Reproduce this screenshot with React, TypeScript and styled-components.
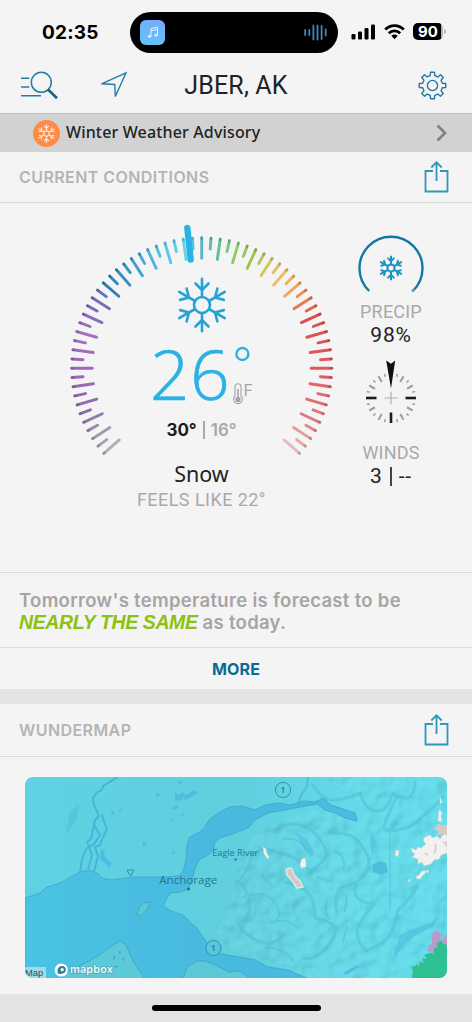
import styled, { createGlobalStyle } from "styled-components";

const GlobalStyle = createGlobalStyle`
	* {
		box-sizing: border-box;
	}
	body {
		margin: 0;
		background: #f4f4f4;
		font-family: Inter, "Liberation Sans", sans-serif;
		color: #222;
	}
	svg {
		display: block;
		flex-shrink: 0;
	}
`;

const Screen = styled.div`
	width: 472px;
	height: 1022px;
	overflow: hidden;
	display: flex;
	flex-direction: column;
	background: #f4f4f4;
`;

const StatusBar = styled.div`
	height: 58px;
	padding: 12px 0 0 42px;
	display: flex;
	align-items: flex-start;
`;

const Clock = styled.div`
	width: 88px;
	line-height: 41px;
	font-size: 19px;
	font-weight: 700;
	letter-spacing: 0.2px;
	color: #000;
`;

const Island = styled.div`
	width: 208px;
	height: 41px;
	padding: 0 11px 0 10px;
	border-radius: 21px;
	background: #000;
	display: flex;
	align-items: center;
	justify-content: space-between;
`;

const MusicTile = styled.div`
	width: 25px;
	height: 25px;
	border-radius: 6px;
	background: linear-gradient(20deg, #62c4fa, #78a9fa);
	display: flex;
	align-items: center;
	justify-content: center;
`;

const StatusIcons = styled.div`
	height: 39px;
	margin-left: 13px;
	display: flex;
	align-items: center;
	gap: 8px;
`;

const Battery = styled.div`
	width: 30px;
	height: 17px;
	border-radius: 5px;
	background: linear-gradient(90deg, #000 28px, #b4b4b4 28px);
	color: #fff;
	font-size: 15px;
	font-weight: 700;
	line-height: 17px;
	text-align: center;
`;

const BatteryGroup = styled.div`
	display: flex;
	align-items: center;
	gap: 1px;
	&::after {
		content: "";
		width: 2px;
		height: 5px;
		border-radius: 0 2px 2px 0;
		background: #bbb;
	}
`;

const Header = styled.div`
	height: 55px;
	padding: 0 20px;
	display: grid;
	grid-template-columns: 1fr auto 1fr;
	align-items: center;
`;

const HeaderLeft = styled.div`
	display: flex;
	gap: 41px;
`;

const HeaderRight = styled.div`
	padding-right: 5px;
	display: flex;
	justify-content: flex-end;
`;

const Title = styled.h1`
	margin: 0;
	font-family: Roboto, sans-serif;
	font-size: 25px;
	font-weight: 400;
	letter-spacing: 0.15px;
`;

const Alert = styled.div`
	height: 39px;
	padding: 0 25px 0 33px;
	border-top: 1px solid #bcbcbc;
	background: #d2d2d2;
	display: flex;
	align-items: center;
	gap: 6px;
`;

const AlertIcon = styled.div`
	width: 27px;
	height: 27px;
	border-radius: 50%;
	background: #fd8b44;
	display: flex;
	align-items: center;
	justify-content: center;
`;

const AlertText = styled.div`
	flex: 1;
	font-family: "Noto Sans", sans-serif;
	font-size: 16px;
	font-weight: 500;
	letter-spacing: 0.15px;
	line-height: 34px;
	padding-bottom: 2px;
`;

const SectionHead = styled.div<{ $height: number }>`
	height: ${(p) => p.$height}px;
	padding: 0 23px 0 19px;
	border-bottom: 1px solid #dadada;
	display: flex;
	align-items: center;
	justify-content: space-between;
	color: #b4b4b4;
`;

const HeadLabel = styled.span`
	font-size: 16px;
	font-weight: 600;
	letter-spacing: 0.42px;
`;

const Conditions = styled.div`
	height: 370px;
	padding: 12px 39px 0 60px;
	border-bottom: 1px solid #dadada;
	display: flex;
	justify-content: space-between;
`;

const Gauge = styled.div`
	width: 283px;
	display: grid;
	align-items: start;
	& > * {
		grid-area: 1 / 1;
	}
`;

const GaugeBody = styled.div`
	padding-top: 62px;
	display: flex;
	flex-direction: column;
	align-items: center;
`;

const Temperature = styled.div`
	height: 83px;
	width: 103px;
	display: flex;
	font-family: "Open Sans", sans-serif;
	font-weight: 300;
	color: #2bb2e4;
`;

const Degrees = styled.span`
	width: 83px;
	font-size: 69px;
	line-height: 81px;
	letter-spacing: 0.8px;
	-webkit-text-stroke: 0.7px #2bb2e4;
`;

const Unit = styled.div`
	padding-top: 13px;
	display: flex;
	flex-direction: column;
	gap: 21px;
`;

const UnitLetter = styled.div`
	display: flex;
	gap: 1px;
	font-family: Inter, sans-serif;
	font-size: 16px;
	font-weight: 400;
	line-height: 14px;
	color: #a6a6a6;
`;

const HighLow = styled.div`
	height: 28px;
	display: flex;
	align-items: center;
	gap: 6px;
	font-size: 17px;
	font-weight: 600;
	color: #a9a9a9;
`;

const High = styled.span`
	font-weight: 700;
	color: #1c1c1c;
`;

const Divider = styled.span<{ $color: string; $height: number }>`
	width: 2px;
	height: ${(p) => p.$height}px;
	background: ${(p) => p.$color};
`;

const Summary = styled.div`
	margin-top: 16px;
	font-family: "Noto Sans", sans-serif;
	font-size: 21.5px;
	line-height: 28px;
`;

const FeelsLike = styled.div`
	font-family: Roboto, sans-serif;
	font-size: 18px;
	letter-spacing: 0.45px;
	line-height: 24px;
	color: #a9a9a9;
	white-space: nowrap;
`;

const Side = styled.div`
	width: 84px;
	padding-top: 19px;
	display: flex;
	flex-direction: column;
	align-items: center;
`;

const SideLabel = styled.div<{ $top: number }>`
	margin-top: ${(p) => p.$top}px;
	font-family: Roboto, sans-serif;
	font-size: 18px;
	letter-spacing: 0.2px;
	line-height: 22px;
	color: #a9a9a9;
`;

const SideValue = styled.div`
	height: 25px;
	display: flex;
	align-items: center;
	gap: 7px;
	font-family: Roboto, sans-serif;
	font-size: 21px;
	letter-spacing: 0.8px;
	line-height: 25px;
`;

const CompassBox = styled.div`
	margin-top: 11px;
`;

const Forecast = styled.div`
	height: 75px;
	padding: 16px 19px 0;
	border-bottom: 1px solid #dedede;
	font-size: 18.5px;
	font-weight: 600;
	letter-spacing: 0.31px;
	line-height: 22px;
	color: #a5a5a5;
	white-space: nowrap;
`;

const Same = styled.em`
	color: #8cc10f;
	font-family: "Liberation Sans", sans-serif;
	font-weight: 700;
	font-size: 19.5px;
	letter-spacing: -0.4px;
`;

const More = styled.button`
	height: 41px;
	border: 0;
	padding: 0;
	background: transparent;
	font-family: inherit;
	font-size: 16px;
	font-weight: 700;
	letter-spacing: 0.15px;
	color: #0a6b94;
`;

const Gap = styled.div`
	height: 15px;
	background: #e3e3e3;
`;

const MapCard = styled.div`
	height: 237px;
	padding: 20px 25px 0;
`;

const MapFrame = styled.div`
	height: 201px;
	border-radius: 8px;
	overflow: hidden;
`;

const BottomBar = styled.div`
	flex: 1;
	padding-top: 11px;
	background: #e3e3e3;
	display: flex;
	justify-content: center;
`;

const HomeIndicator = styled.div`
	width: 169px;
	height: 6px;
	border-radius: 3px;
	background: #000;
`;

const stops: [number, string][] = [
	[-32, "#b2aeb8"],
	[-30, "#a198b0"],
	[-27, "#8a6cab"],
	[-22, "#9f68bc"],
	[-18, "#a56fbd"],
	[-15, "#7c6bbb"],
	[-13, "#6572bf"],
	[-12, "#2e7eb6"],
	[-9, "#3596c9"],
	[-5, "#57bfe2"],
	[-2, "#62d5ee"],
	[0, "#58b6c9"],
	[2, "#62bf9e"],
	[4, "#8fca6d"],
	[6, "#9fc452"],
	[8, "#d6c658"],
	[10, "#f0b964"],
	[12, "#f4a259"],
	[14, "#e67853"],
	[16, "#d5504f"],
	[22, "#df5960"],
	[28, "#e27b7e"],
	[32, "#eab8ba"],
];

function hexToRgb(hex: string) {
	return [1, 3, 5].map((i) => parseInt(hex.slice(i, i + 2), 16));
}

function tickColor(n: number) {
	const next = Math.max(
		1,
		stops.findIndex(([at]) => at >= n)
	);
	const [a, from] = stops[next - 1];
	const [b, to] = stops[next];
	const t = (n - a) / (b - a);
	const end = hexToRgb(to);
	const mixed = hexToRgb(from).map((v, i) => Math.round(v + (end[i] - v) * t));
	return `rgb(${mixed.join(",")})`;
}

const ticks = Array.from({ length: 65 }, (_, i) => i - 32);

function Dial() {
	return (
		<svg width="283" height="250" viewBox="0 0 283 250">
			<g transform="translate(141.7 152.8)" strokeLinecap="round">
				{ticks.map((n) => (
					<g key={n} transform={`rotate(${n * 4.1})`}>
						<line y1="-130" y2={n % 2 ? -119 : -109.5} stroke={tickColor(n)} strokeWidth="2.9" />
						<line y1="-130.2" y2="-129" stroke="#000" strokeOpacity="0.16" strokeWidth="2.6" />
					</g>
				))}
			</g>
			<path d="M127.3 13 L130.7 44.5" stroke="#29b4e5" strokeWidth="6.4" strokeLinecap="round" />
		</svg>
	);
}

function Snowflake({
	size,
	color,
	weight,
}: {
	size: number;
	color: string;
	weight: number;
}) {
	return (
		<svg
			width={size}
			height={size}
			viewBox="-28 -28 56 56"
			fill="none"
			stroke={color}
			strokeWidth={weight}
			strokeLinecap="round"
			strokeLinejoin="round"
		>
			<circle r="8" />
			{[0, 60, 120, 180, 240, 300].map((a) => (
				<path key={a} transform={`rotate(${a})`} d="M0 -8 V-26.3 M-6.5 -21.5 L0 -15 L6.5 -21.5" />
			))}
		</svg>
	);
}

function Share() {
	return (
		<svg width="25" height="33" viewBox="0 0 25 33" fill="none" stroke="#3295bd" strokeWidth="1.8">
			<path d="M9 10 H1.5 V30.5 H23.5 V10 H16 M12.5 20 V1.2 M7.3 6.5 L12.5 1.2 L17.7 6.5" />
		</svg>
	);
}

function gearPath() {
	const points: string[] = [];
	for (let i = 0; i < 8; i++) {
		[
			[-13, 10.1],
			[-8.5, 13.4],
			[8.5, 13.4],
			[13, 10.1],
		].forEach(([offset, r]) => {
			const a = ((i * 45 + offset) * Math.PI) / 180;
			points.push(`${(Math.sin(a) * r).toFixed(2)} ${(-Math.cos(a) * r).toFixed(2)}`);
		});
	}
	return `M${points.join("L")}Z`;
}

function PrecipArc() {
	return (
		<svg width="68" height="60" viewBox="-34 -34 68 60">
			<path d="M-21.8 23 A31.5 31.5 0 1 1 21.8 23" fill="none" stroke="#1577a4" strokeWidth="2.4" />
			<path d="M21 23.6 L23.5 21" stroke="#8a9ca5" strokeWidth="2.6" />
			<g transform="translate(-12.5 -12.5)">
				<Snowflake size={25} color="#1b93c4" weight={4.4} />
			</g>
		</svg>
	);
}

function Compass() {
	return (
		<svg width="60" height="66" viewBox="-30 -39 60 66">
			{Array.from({ length: 24 }, (_, i) => i).map((i) => {
				if (i === 0) return null;
				const main = i % 6 === 0;
				const long = i % 2 === 0;
				return (
					<line
						key={i}
						y1="-25"
						y2={main ? -14.5 : long ? -18.5 : -22}
						stroke={main ? "#1d1d1d" : "#a0a0a0"}
						strokeWidth={main ? 2.6 : long ? 2.1 : 1.6}
						transform={`rotate(${i * 15})`}
					/>
				);
			})}
			<path d="M-6.5 0 H6.5 M0 -6.5 V6.5" stroke="#aaa" strokeWidth="1.1" />
			<path d="M-4.8 -37.5 L0 -34.3 L4.2 -37.5 L0 -9.5 Z" fill="#111" />
		</svg>
	);
}

function WunderMap() {
	return (
		<svg width="422" height="201" viewBox="0 0 422 201">
			<defs>
				<linearGradient id="sea" x1="0" y1="0" x2="1" y2="0">
					<stop offset="0" stopColor="#4ac3e3" />
					<stop offset="0.6" stopColor="#48b9df" />
					<stop offset="1" stopColor="#4abde2" />
				</linearGradient>
				<linearGradient id="land" x1="0" y1="0" x2="1" y2="0">
					<stop offset="0" stopColor="#5ed2e3" />
					<stop offset="0.5" stopColor="#60cfde" />
					<stop offset="0.8" stopColor="#62dbe9" />
					<stop offset="1" stopColor="#60dcec" />
				</linearGradient>
				<filter id="relief" x="0" y="0" width="1" height="1">
					<feTurbulence type="fractalNoise" baseFrequency="0.06" numOctaves="2" seed="8" />
					<feDiffuseLighting surfaceScale="8" lightingColor="#8fe9f0" diffuseConstant="1.1">
						<feDistantLight azimuth="225" elevation="52" />
					</feDiffuseLighting>
				</filter>
				<clipPath id="mountains">
					<path d="M210 108 L214 84 L226 62 L250 46 L270 38 L295 32 L335 48 L340 30 L300 0 H422 V201 H282 L262 190 L230 181 L202 172 L190 150 L200 128 Z" />
				</clipPath>
			</defs>
			<rect width="422" height="201" fill="url(#land)" />
			<path d="M45 35 L54 27 L52 43 L41 57Z" fill="#54c8da" />
			<g clipPath="url(#mountains)">
				<rect width="422" height="201" filter="url(#relief)" opacity="0.15" />
			</g>
			<g fill="none" stroke="#4fc0d5" strokeWidth="3" opacity="0.55" strokeLinejoin="round" strokeLinecap="round">
				<path d="M247 55 Q262 44 275 48 T294 61 Q304 74 300 81 T285 94 Q272 80 262 78 T240 71 Q226 76 225 84 T214 104 Q226 118 225 130 T213 147 Q222 160 235 165 T260 157" />
				<path d="M288 8 Q298 24 310 23 T335 16 Q340 34 352 34 T367 16 Q380 24 385 20 T390 5 M372 19 Q362 40 359 49 T385 50 Q410 30 418 20" />
				<path d="M260 105 Q280 110 285 118 T290 141 Q306 144 310 150 T300 172 Q290 184 278 181 M305 56 Q324 56 330 61 T344 81 Q344 98 335 103 T315 111 Q308 122 312 135" />
				<path d="M345 90 Q328 106 330 116 T350 127 Q340 136 334 148 T341 174 Q360 166 365 158 T373 133 Q384 124 392 110" />
				<path d="M218 120 Q240 112 250 126 T246 146 Q262 140 272 150 M240 170 Q262 172 268 184 M258 62 Q276 60 280 72 M310 74 Q322 80 318 92 M302 122 Q298 132 304 142 M236 98 L246 108 M322 118 L320 134 M292 100 L304 104 M322 150 L318 164" strokeWidth="2" />
			</g>
			<g fill="url(#sea)" stroke="#3fa5c8" strokeWidth="0.8" strokeLinejoin="round">
				<path d="M0 121 L15 116 L22 110 L35 106 L44 101 L55 95 L64 93 L72 96 L77 101 L86 103 L108 100 L138 100 L154 99 L158 94 L161 83 L162 68 L165 60 L178 53 L184 43 L195 35 L205 30 L218 29 L230 33 L240 28 L253 26 L265 28 L278 24 L290 25 L298 21 L306 28 L318 32 L330 36 L332 44 L320 41 L310 36 L300 33 L292 27 L270 31 L243 36 L230 43 L223 51 L210 56 L195 61 L190 65 L188 73 L182 79 L175 82 L170 91 L167 104 L163 112 L156 115 L145 116 L138 129 L146 134 L158 138 L166 146 L172 151 L180 163 L188 175 L202 178 L215 180 L230 183 L243 190 L263 193 L284 202 H0Z" />
			</g>
			<g fill="#5bc9d8" stroke="#429fbd" strokeWidth="0.8">
				<path d="M36 202 L45 193 L62 185 L74 178 L85 170 L95 164 L101 168 L108 184 L120 202Z" />
				<path d="M158 202 L162 190 L172 184 L180 184 L188 187 L198 192 L204 195 L215 194 L226 202Z" />
				<path d="M112 138 L115 129 L121 125 L125 126 L122 133 L115 139Z" />
			</g>
			<g fill="none" stroke="#43b4d8" strokeWidth="1.8" strokeLinejoin="round">
				<path d="M92 0 L85 5 L79 8 L76 14 L72 15 L68 21 L69 28 L74 39 L70 43 L69 48 L75 58 L69 67 L61 72 L57 82 L55 96" />
				<path d="M77 37 L79 45 L82 52 L78 60 L75 68 L70 70 L73 79 L69 95 M69 48 L66 62 L62 65 L67 78 L63 92" />
				<path d="M273 28 L276 18 L282 10 L283 0" opacity="0.7" />
			</g>
			<g fill="#4ebcdf">
				<path d="M76 72 L80 74 L79 78 L83 83 L87 86 L84 91 L79 85 L75 82Z" />
				<path d="M150 16 L154 18 L159 15 L157 23 L150 24Z M157 18 L163 17 L170 13 L173 16 L166 20 L160 23Z M131 15 L135 17 L132 21Z M147 31 L152 28 L153 31 L149 33Z M118 64 L122 68 L118 70Z M86 34 L91 35 L87 39Z M94 33 L98 32 L94 36Z M146 76 L149 74 L150 77Z M153 4 L158 5 L155 8Z M145 43 L148 42 L147 45Z M155 38 L159 36 L158 39Z" />
				<path d="M347 88 L354 84 L361 86 L363 95 L356 98 L348 95Z" />
				<path d="M270 55 L282 62 L290 77 L286 80 L278 70Z M347 54 L351 65 L347 77 L345 62Z" opacity="0.55" />
				<path d="M375 158 L388 152 L407 145 L412 139 L409 149 L391 158 L379 168 L370 181 L369 175Z" opacity="0.65" />
				<path d="M318 196 L333 188 L334 190 L321 198Z" />
			</g>
			<path d="M365 55 V134" stroke="#43a8bd" strokeWidth="0.5" />
			<path d="M88 178 L91 180 L88 183Z M94 173 L97 175 L94 177Z M98 180 L100 184 L97 183Z M90 188 L93 189 L90 192Z" fill="#4ba9c2" />
			<g fill="#f3f0f0" stroke="#d8cfcd" strokeWidth="0.5">
				<path d="M238 70 L241 72 L242 77 L244 80 L243 82 L239 77Z" />
				<path d="M277 82 L280 81 L281 86 L281 90 L276 91 L275 87Z" />
				<path d="M261 93 L264 91 L267 92 L270 99 L275 104 L278 110 L272 111 L267 104 L262 98Z" fill="#d5c9c5" stroke="#eceaea" strokeWidth="1.2" />
				<path d="M422 56 L418 58 L415 62 L412 59 L408 61 L405 58 L400 60 L398 63 L401 67 L396 71 L393 70 L391 73 L386 71 L387 75 L390 77 L387 80 L393 82 L393 87 L397 85 L399 89 L406 87 L409 83 L414 82 L416 78 L422 76Z" />
				<path d="M422 48 L417 49 L413 47 L409 52 L414 54 L412 58 L418 57 L422 58Z" fill="#d9c7c5" />
				<path d="M414 33 L417 35 L416 40 L417 45 L413 44Z M415 20 L417 25 L415 27Z M371 73 L374 74 L373 80 L370 78Z M391 99 L394 98 L397 94 L402 94 L398 98 L395 102 L392 102Z M400 94 L404 93 L403 96Z M383 103 L386 102 L384 105Z" />
			</g>
			<path d="M410 67 Q412 72 409 76 M418 66 L422 65 L421 69 M400 76 L403 78" fill="none" stroke="#dcc6c2" strokeWidth="1.6" />
			<path d="M402 173 L404 170 L403 168 L407 167 L407 157 L411 153 L414 155 L416 157 L415 163 L419 161 L420 158 L422 157 V174 L407 176Z" fill="#b79bcd" />
			<path d="M422 201 H387 L388 194 L386 190 L390 189 L392 187 L394 190 L395 184 L399 186 L397 181 L402 182 L399 178 L405 176 L409 177 L409 171 L413 170 L411 166 L416 164 L419 167 L422 168Z" fill="#2cc092" />
			<g fill="none" stroke="#348fa9">
				<circle cx="258" cy="13" r="7.6" />
				<circle cx="188.5" cy="171" r="7.6" fill="#58c7de" />
				<path d="M102 93 H109 L105.5 99Z" />
			</g>
			<g fontFamily="Open Sans, sans-serif" fill="#26768f" textAnchor="middle">
				<text x="258" y="16" fontSize="8.5" fontWeight="600">1</text>
				<text x="188.5" y="174" fontSize="8.5" fontWeight="600">1</text>
				<text x="210.3" y="79" fontSize="9.2" fontWeight="500" textLength="46" lengthAdjust="spacingAndGlyphs">Eagle River</text>
				<text x="163.3" y="106.5" fontSize="11.5" fontWeight="500" textLength="58" lengthAdjust="spacingAndGlyphs">Anchorage</text>
			</g>
			<circle cx="163.5" cy="112" r="1.4" fill="#1d687f" />
			<circle cx="210.5" cy="82.5" r="1.2" fill="#2a7e94" />
			<rect y="190" width="21" height="11" fill="#b5dfe9" fillOpacity="0.8" />
			<text x="0" y="199.3" fontFamily="Liberation Sans, sans-serif" fontSize="9.3" fill="#344c54">Map</text>
			<circle cx="36.3" cy="193" r="6.6" fill="#fff" />
			<path d="M32.8 196.8 C31.5 192 33.8 189 37 189 C40 189 41.3 191.6 40.6 194 C39.5 197 36 197.2 32.8 196.8Z" fill="#347d9b" />
			<circle cx="37.2" cy="192.7" r="1.6" fill="#fff" />
			<text x="45" y="196" fontFamily="Inter, sans-serif" fontSize="11" fontWeight="600" fill="#eefafc" stroke="#4b99ac" strokeWidth="1.2" paintOrder="stroke" textLength="43">mapbox</text>
		</svg>
	);
}

export default function App() {
	return (
		<Screen>
			<GlobalStyle />
			<StatusBar>
				<Clock>02:35</Clock>
				<Island>
					<MusicTile>
						<svg width="12" height="13" viewBox="0 0 12 13" fill="none" stroke="#e5f5ff">
							<path d="M4 10 V2.7 L10.5 1.2 V8.7 M4 4.8 L10.5 3.3" />
							<ellipse cx="2.6" cy="10.4" rx="1.3" ry="0.9" fill="#e5f5ff" />
							<ellipse cx="9.1" cy="9.2" rx="1.3" ry="0.9" fill="#e5f5ff" />
						</svg>
					</MusicTile>
					<svg width="23" height="17" viewBox="0 0 23 17" stroke="#4585b8" strokeWidth="1.8" strokeLinecap="round">
						<path d="M1.2 6 V11 M5.3 6 V11 M9.4 1.5 V15.5 M13.5 1.5 V15.5 M17.6 2 V15 M21.7 5.5 V11.5" />
					</svg>
				</Island>
				<StatusIcons>
					<svg width="25" height="16" viewBox="0 0 25 16" fill="#000">
						<rect x="0.5" y="10" width="4" height="5.5" rx="1.2" />
						<rect x="7" y="7.5" width="4" height="8" rx="1.2" />
						<rect x="13.5" y="4" width="4" height="11.5" rx="1.2" />
						<rect x="20" y="0.5" width="4" height="15" rx="1.2" />
					</svg>
					<svg width="21" height="16" viewBox="0 0 21 16" fill="none" stroke="#000" strokeWidth="2.8">
						<path d="M1.2 5.6 C6.5 0.2 14.5 0.2 19.8 5.6 M4.8 9.3 C8 6 13 6 16.2 9.3" />
						<path d="M10.5 15.2 L7.3 11.8 C9 10.2 12 10.2 13.7 11.8Z" fill="#000" stroke="none" />
					</svg>
					<BatteryGroup>
						<Battery>90</Battery>
					</BatteryGroup>
				</StatusIcons>
			</StatusBar>
			<Header>
				<HeaderLeft>
					<svg width="39" height="29" viewBox="0 0 39 29" fill="none" stroke="#287ba2" strokeWidth="1.5">
						<circle cx="21.3" cy="11.3" r="10" />
						<path d="M1 7.3 H9.3 M1 16 H9.3 M1 24.7 H21" />
						<path d="M28 18.5 L37 27.2" stroke="#176487" strokeWidth="2.6" />
					</svg>
					<svg width="28" height="28" viewBox="0 0 28 28" fill="none" stroke="#287ba2" strokeWidth="1.4" strokeLinejoin="miter">
						<path d="M26 1.8 L1.5 12.8 L14.8 13.5 L15.3 25.5 Z" />
					</svg>
				</HeaderLeft>
				<Title>JBER, AK</Title>
				<HeaderRight>
					<svg width="29" height="29" viewBox="-14.5 -14.5 29 29" fill="none" stroke="#2278a3" strokeWidth="1.4" strokeLinejoin="round">
						<path d={gearPath()} />
						<circle r="5.1" />
					</svg>
				</HeaderRight>
			</Header>
			<Alert>
				<AlertIcon>
					<Snowflake size={19} color="#ffe6d5" weight={3.4} />
				</AlertIcon>
				<AlertText>Winter Weather Advisory</AlertText>
				<svg width="11" height="18" viewBox="0 0 11 18" fill="none" stroke="#808080" strokeWidth="2.6">
					<path d="M1.5 1.5 L9 9 L1.5 16.5" />
				</svg>
			</Alert>
			<SectionHead $height={51}>
				<HeadLabel>CURRENT CONDITIONS</HeadLabel>
				<Share />
			</SectionHead>
			<Conditions>
				<Gauge>
					<Dial />
					<GaugeBody>
						<Snowflake size={56} color="#26a3d4" weight={2.6} />
						<Temperature>
							<Degrees>26</Degrees>
							<Unit>
								<svg width="18" height="16" viewBox="0 0 18 16" fill="none" stroke="#2bb2e4" strokeWidth="2.4">
									<circle cx="9.4" cy="8" r="6" />
								</svg>
								<UnitLetter>
									<svg width="10" height="22" viewBox="0 0 10 22" fill="none" stroke="#a2a2a2" strokeWidth="1.1">
										<path d="M2 13 V3.8 A3 3 0 0 1 8 3.8 V13 A4.4 4.4 0 1 1 2 13Z" />
										<path d="M5 6 V16" strokeWidth="1.5" />
										<circle cx="5" cy="16.6" r="2.1" fill="#a2a2a2" />
									</svg>
									F
								</UnitLetter>
							</Unit>
						</Temperature>
						<HighLow>
							<High>30°</High>
							<Divider $color="#a9a9a9" $height={18} />
							<span>16°</span>
						</HighLow>
						<Summary>Snow</Summary>
						<FeelsLike>FEELS LIKE 22°</FeelsLike>
					</GaugeBody>
				</Gauge>
				<Side>
					<PrecipArc />
					<SideLabel $top={7}>PRECIP</SideLabel>
					<SideValue>98%</SideValue>
					<CompassBox>
						<Compass />
					</CompassBox>
					<SideLabel $top={17}>WINDS</SideLabel>
					<SideValue>
						3 <Divider $color="#444" $height={19} /> --
					</SideValue>
				</Side>
			</Conditions>
			<Forecast>
				Tomorrow's temperature is forecast to be
				<br />
				<Same>NEARLY THE SAME</Same> as today.
			</Forecast>
			<More>MORE</More>
			<Gap />
			<SectionHead $height={53}>
				<HeadLabel>WUNDERMAP</HeadLabel>
				<Share />
			</SectionHead>
			<MapCard>
				<MapFrame>
					<WunderMap />
				</MapFrame>
			</MapCard>
			<BottomBar>
				<HomeIndicator />
			</BottomBar>
		</Screen>
	);
}
